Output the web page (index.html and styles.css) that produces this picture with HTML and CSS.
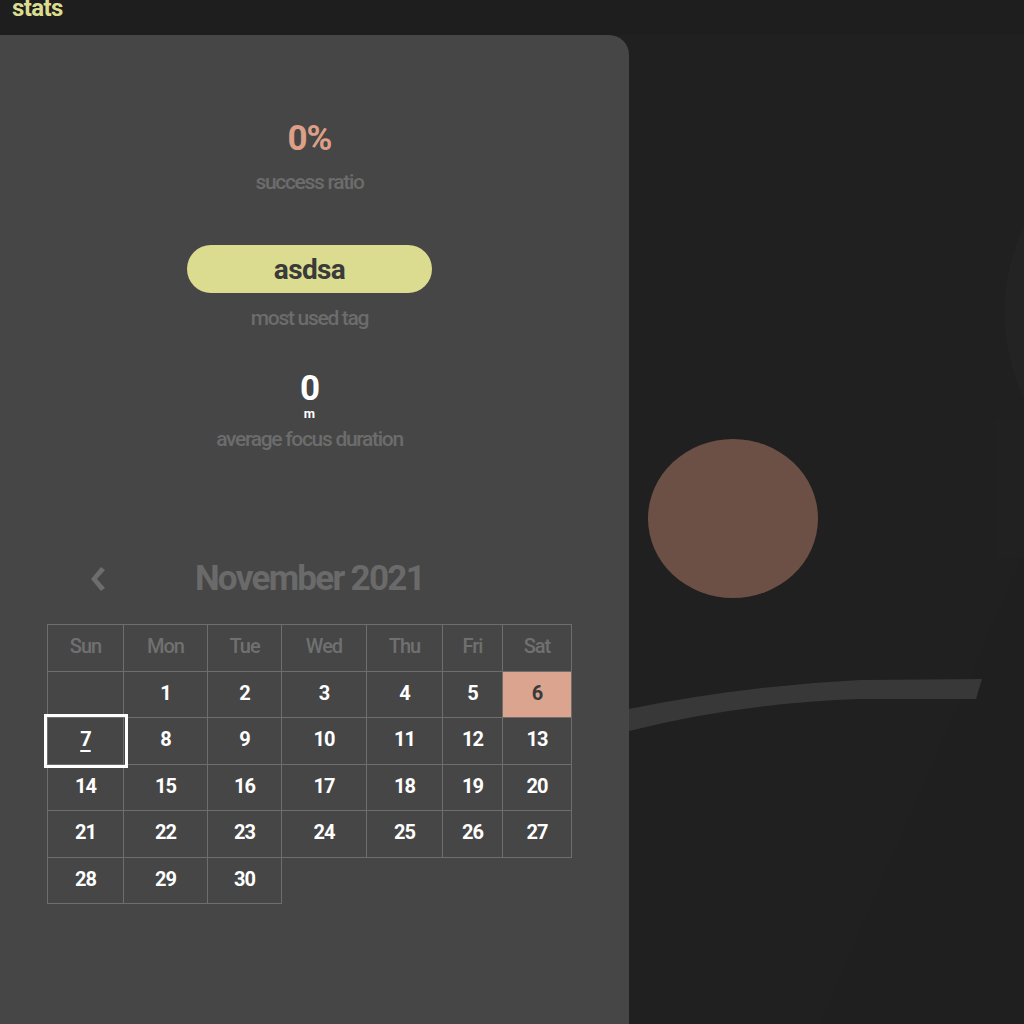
FILE: index.html
```html
<!DOCTYPE html>
<html lang="en">
<head>
<meta charset="utf-8">
<title>stats</title>
<link rel="stylesheet" href="styles.css">
</head>
<body>
<header class="topbar"><h1 class="brand">stats</h1></header>
<div class="layout">
  <section class="panel">
    <div class="stat stat-ratio">
      <div class="stat-value ratio">0%</div>
      <div class="stat-label">success ratio</div>
    </div>
    <div class="stat stat-tag">
      <div class="tag-pill">asdsa</div>
      <div class="stat-label">most used tag</div>
    </div>
    <div class="stat stat-focus">
      <div class="stat-value focus">0</div>
      <div class="stat-unit">m</div>
      <div class="stat-label">average focus duration</div>
    </div>

    <div class="calendar">
      <div class="cal-head">
        <button class="cal-prev" aria-label="previous month">
          <svg width="16" height="24" viewBox="0 0 16 24"><polygon points="11,0 15,3 7,12 15,21 11,24 1,12" fill="#6d6d6d"/></svg>
        </button>
        <div class="cal-title">November 2021</div>
        <div></div>
      </div>
      <table class="cal-grid">
        <thead>
          <tr><th class="c-sun">Sun</th><th class="c-mon">Mon</th><th class="c-tue">Tue</th><th class="c-wed">Wed</th><th class="c-thu">Thu</th><th class="c-fri">Fri</th><th class="c-sat">Sat</th></tr>
        </thead>
        <tbody>
          <tr><td class="empty"></td><td>1</td><td>2</td><td>3</td><td>4</td><td>5</td><td class="marked">6</td></tr>
          <tr><td class="today"><span class="today-num">7</span></td><td>8</td><td>9</td><td>10</td><td>11</td><td>12</td><td>13</td></tr>
          <tr><td>14</td><td>15</td><td>16</td><td>17</td><td>18</td><td>19</td><td>20</td></tr>
          <tr><td>21</td><td>22</td><td>23</td><td>24</td><td>25</td><td>26</td><td>27</td></tr>
          <tr><td>28</td><td>29</td><td>30</td></tr>
        </tbody>
      </table>
    </div>
  </section>

  <div class="scene">
    <svg class="scene-art" width="395" height="989" viewBox="629 35 395 989" preserveAspectRatio="none">
      <path d="M1024,227 Q985,310 1024,400 Z" fill="#232323"/>
      <path d="M995,420 L1024,420 L1024,558 L995,558 Z" fill="#212121"/>
      <path d="M1022,558 L1024,558 L1024,1024 L820,1024 Z" fill="#1f1f1f"/>
      <ellipse cx="733" cy="518.5" rx="85" ry="79.5" fill="#6c5045"/>
      <path d="M629,709 Q740,686 860,680 L982,679 L976,699 L860,699 Q740,703 629,731 Z" fill="#383838"/>
    </svg>
  </div>
</div>
</body>
</html>
```

FILE: styles.css
```css
* { box-sizing: border-box; }

html, body {
  margin: 0;
  padding: 0;
  background: #202020;
  font-family: Roboto, "Liberation Sans", Arial, sans-serif;
  overflow: hidden;
}

.topbar {
  height: 35px;
  background: #1e1e1e;
  overflow: hidden;
}

.brand {
  margin: -4px 0 0 12px;
  font-size: 24px;
  line-height: 24px;
  font-weight: 700;
  letter-spacing: -0.6px;
  color: #dcdc91;
}

.layout {
  display: flex;
  height: 989px;
}

.panel {
  width: 629px;
  flex: none;
  background: #464646;
  border-top-right-radius: 20px;
  padding: 83px 10px 0 0;
  display: flex;
  flex-direction: column;
  align-items: center;
}

.stat {
  display: flex;
  flex-direction: column;
  align-items: center;
}

.stat-value {
  font-size: 35px;
  line-height: 41px;
  font-weight: 700;
  letter-spacing: -1px;
}

.ratio { color: #dd9f85; }

.stat-label {
  font-size: 21px;
  line-height: 25px;
  font-weight: 500;
  color: #6c6c6c;
  letter-spacing: -1.3px;
}

.stat-ratio .stat-label { margin-top: 11px; }

.stat-tag { margin-top: 50px; }

.tag-pill {
  width: 245px;
  height: 48px;
  border-radius: 24px;
  background: #dcdc91;
  color: #3a3a38;
  font-size: 28px;
  font-weight: 700;
  display: flex;
  align-items: center;
  justify-content: center;
  letter-spacing: -0.6px;
}

.stat-tag .stat-label { margin-top: 13px; }

.stat-focus { margin-top: 40px; }

.focus {
  color: #ffffff;
  line-height: 36px;
}

.stat-unit {
  color: #ffffff;
  font-size: 13px;
  line-height: 13px;
  font-weight: 700;
}

.stat-focus .stat-label { margin-top: 7px; }

.calendar {
  margin-top: 106px;
  display: flex;
  flex-direction: column;
  align-items: center;
}

.cal-head {
  width: 524px;
  display: grid;
  grid-template-columns: 1fr auto 1fr;
  align-items: center;
}

.cal-prev {
  justify-self: start;
  margin-left: 42px;
  padding: 0;
  border: 0;
  background: none;
  display: flex;
  align-items: center;
}

.cal-title {
  font-size: 35px;
  line-height: 41px;
  font-weight: 700;
  color: #6a6a6a;
  letter-spacing: -1.7px;
}

.cal-grid {
  margin-top: 25px;
  border-collapse: collapse;
}

.cal-grid th,
.cal-grid td {
  border: 1px solid #6e6e6e;
  height: 46.5px;
  padding: 0 0 3px;
  text-align: center;
  font-size: 20px;
  letter-spacing: -1px;
}

.c-sun { width: 76px; }
.c-mon { width: 84px; }
.c-tue { width: 74px; }
.c-wed { width: 85px; }
.c-thu { width: 76px; }
.c-fri { width: 60px; }
.c-sat { width: 69px; }

.cal-grid th {
  font-weight: 500;
  color: #707070;
}

.cal-grid td {
  font-weight: 700;
  color: #ffffff;
}

.cal-grid td.marked {
  background: #dba48e;
  color: #3a3a3a;
}

.cal-grid td.today {
  outline: 3px solid #ffffff;
  outline-offset: 1px;
}

.today-num {
  text-decoration: underline;
  text-underline-offset: 4px;
  text-decoration-thickness: 2px;
}

.scene {
  flex: 1;
  overflow: hidden;
}

.scene-art {
  display: block;
}
```
